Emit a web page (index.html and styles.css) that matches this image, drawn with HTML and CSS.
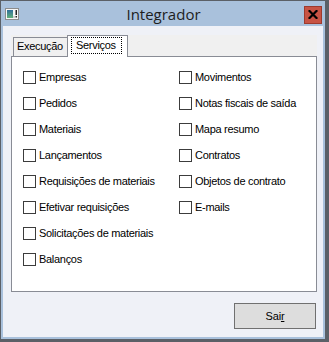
FILE: index.html
```html
<!DOCTYPE html>
<html lang="pt">
<head>
    <meta charset="UTF-8">
    <meta name="viewport" content="width=device-width, initial-scale=1.0">
    <title>Integrador</title>
    <link rel="stylesheet" href="styles.css">
</head>
<body>
    <div class="window">
        <div class="titlebar">
            <svg class="app-icon" width="14" height="12" viewBox="0 0 14 12">
                <defs>
                    <linearGradient id="ig" x1="0" y1="0" x2="0" y2="1">
                        <stop offset="0" stop-color="#2f6f9a"/>
                        <stop offset="1" stop-color="#62b07a"/>
                    </linearGradient>
                </defs>
                <rect x="0.5" y="0.5" width="13" height="11" fill="#f6f6f6" stroke="#8c8c8c"/>
                <rect x="2" y="2" width="6" height="8" fill="url(#ig)"/>
                <rect x="10.5" y="2" width="1.5" height="5" fill="#222"/>
                <rect x="10.5" y="8" width="1.5" height="1.5" fill="#222"/>
                <rect x="8" y="8" width="2" height="2" fill="#cfcfcf"/>
            </svg>
            <div class="title">Integrador</div>
            <div class="close">
                <svg width="10" height="9" viewBox="0 0 10 9">
                    <path d="M1.5 1 L8.5 8 M8.5 1 L1.5 8" stroke="#000" stroke-width="2.2" stroke-linecap="square"/>
                </svg>
            </div>
        </div>

        <div class="client">
            <div class="tabs">
                <div class="tab-strip">
                    <div class="tab">Execução</div>
                    <div class="tab active"><span class="focus">Serviços</span></div>
                </div>
                <div class="tab-panel">
                    <div class="options">
                        <label class="option"><span class="box"></span>Empresas</label>
                        <label class="option"><span class="box"></span>Movimentos</label>
                        <label class="option"><span class="box"></span>Pedidos</label>
                        <label class="option"><span class="box"></span>Notas fiscais de saída</label>
                        <label class="option"><span class="box"></span>Materiais</label>
                        <label class="option"><span class="box"></span>Mapa resumo</label>
                        <label class="option"><span class="box"></span>Lançamentos</label>
                        <label class="option"><span class="box"></span>Contratos</label>
                        <label class="option"><span class="box"></span>Requisições de materiais</label>
                        <label class="option"><span class="box"></span>Objetos de contrato</label>
                        <label class="option"><span class="box"></span>Efetivar requisições</label>
                        <label class="option"><span class="box"></span>E-mails</label>
                        <label class="option"><span class="box"></span>Solicitações de materiais</label>
                        <span></span>
                        <label class="option"><span class="box"></span>Balanços</label>
                    </div>
                </div>
            </div>
            <div class="actions">
                <button class="button">Sai<u>r</u></button>
            </div>
        </div>
    </div>
</body>
</html>
```

FILE: styles.css
```css
* {
    box-sizing: border-box;
}
body {
    margin: 0;
    width: 329px;
    height: 342px;
    font-family: "Liberation Sans", Arial, sans-serif;
    font-size: 11px;
    color: #000;
}
.window {
    width: 329px;
    height: 342px;
    background-color: #a9c1dc;
    border-style: solid;
    border-color: #5b6067;
    border-width: 1px 4px 3px 1px;
    display: flex;
    flex-direction: column;
}
.titlebar {
    height: 25px;
    padding: 0 3px 0 4px;
    display: grid;
    grid-template-columns: 1fr auto 1fr;
    align-items: center;
}
.app-icon {
    justify-self: start;
    display: block;
    margin-top: 1px;
}
.title {
    font-family: "Open Sans", "Noto Sans", sans-serif;
    font-size: 15px;
    color: #1e1e1e;
    line-height: 20px;
    margin-top: 1px;
}
.close {
    justify-self: end;
    width: 18px;
    height: 18px;
    margin-top: 2px;
    background-color: #c75344;
    border: 1px solid #9d3a2e;
    display: flex;
    align-items: center;
    justify-content: center;
}
.close svg {
    display: block;
}
.client {
    flex: 1;
    margin: 0 2px 2px 2px;
    background-color: #eff1f7;
    padding: 9px 6px 8px 8px;
    display: flex;
    flex-direction: column;
}
.tabs {
    height: 257px;
    display: flex;
    flex-direction: column;
}
.tab-strip {
    height: 21px;
    background-color: #f0f0f0;
    display: flex;
    align-items: flex-end;
    padding-left: 2px;
}
.tab {
    height: 19px;
    width: 56px;
    border: 1px solid #898c95;
    border-bottom: none;
    background-color: #f0f0f0;
    padding: 0 0 0 3px;
    line-height: 17px;
    letter-spacing: -0.3px;
    white-space: nowrap;
}
.tab.active {
    position: relative;
    z-index: 1;
    height: 22px;
    width: 61px;
    margin-left: -2px;
    margin-bottom: -1px;
    background-color: #fff;
    padding: 1px 0 0 3px;
}
.focus {
    display: inline-block;
    height: 17px;
    line-height: 15px;
    padding: 0 5px 0 4px;
    border: 1px dotted #000;
}
.tab-panel {
    flex: 1;
    background-color: #fff;
    border: 1px solid #898c95;
    padding: 14px 0 0 11px;
}
.options {
    display: grid;
    grid-template-columns: 156px 1fr;
    row-gap: 13px;
}
.option {
    display: flex;
    align-items: center;
    gap: 3px;
    height: 13px;
    line-height: 13px;
    letter-spacing: -0.3px;
    white-space: nowrap;
}
.box {
    width: 13px;
    height: 13px;
    border: 1px solid #3c3c3c;
    background-color: #fff;
    flex: none;
}
.actions {
    margin-top: 11px;
    display: flex;
    justify-content: flex-end;
    padding-right: 1px;
}
.button {
    width: 82px;
    height: 26px;
    border: 1px solid #707070;
    background-color: #dddddd;
    font-family: "Liberation Sans", Arial, sans-serif;
    font-size: 11px;
    color: #000;
    padding: 0;
    letter-spacing: -0.2px;
}
```
